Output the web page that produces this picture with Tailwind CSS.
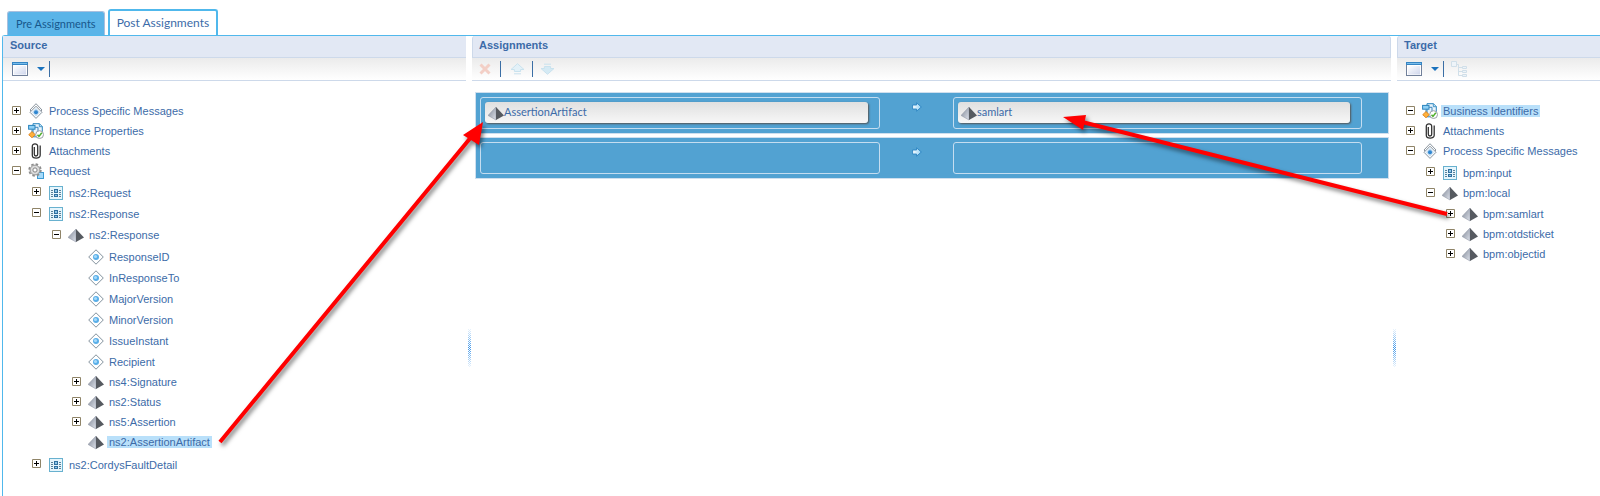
<!DOCTYPE html>
<html lang="en">
<head>
  <meta charset="UTF-8">
  <title>Message Map</title>
  <script src="https://cdn.jsdelivr.net/npm/@tailwindcss/browser@4"></script>
  <meta name="viewport" content="width=device-width, initial-scale=1.0">
</head>
<body class="relative flex min-h-screen flex-col overflow-hidden bg-white font-['Liberation_Sans',Arial,sans-serif] text-[11px] text-[#3c6ba8]">

  <!-- shared icons -->
  <svg class="absolute size-0">
    <defs>
      <linearGradient id="pyrLight" x1="0" y1="0" x2="1" y2="1">
        <stop offset="0" stop-color="#7d8593"/><stop offset="1" stop-color="#dfe3ec"/>
      </linearGradient>
      <linearGradient id="winFill" x1="0" y1="0" x2="1" y2="1">
        <stop offset="0" stop-color="#ffffff"/><stop offset="1" stop-color="#cfd6ec"/>
      </linearGradient>
      <linearGradient id="arrowFill" x1="0" y1="0" x2="1" y2="0">
        <stop offset="0" stop-color="#ffffff"/><stop offset="1" stop-color="#8fd0f5"/>
      </linearGradient>
      <pattern id="checker" width="2" height="2" patternUnits="userSpaceOnUse">
        <path d="M0 0h1v1H0zM1 1h1v1H1z" fill="#3f97ea"/>
      </pattern>
      <linearGradient id="fade" x1="0" y1="0" x2="0" y2="1">
        <stop offset="0" stop-color="#fff" stop-opacity=".9"/><stop offset=".5" stop-color="#fff" stop-opacity="0"/><stop offset="1" stop-color="#fff" stop-opacity=".9"/>
      </linearGradient>
    </defs>
    <symbol id="message" viewBox="0 0 16 16">
      <path d="M8 .7 14 7 8 13 2 7Z" fill="#fff" stroke="#8a949e"/>
      <path d="M8 3.2 14 9.3 8 15.4 2 9.3Z" fill="#f4f9fd" stroke="#8a949e"/>
      <path d="M8 5.6 11.4 9.2 8 12.8 4.6 9.2Z" fill="#c4def4" stroke="#a9c8e2" stroke-width=".6"/>
      <circle cx="8" cy="9.2" r="2" fill="#2f86d0"/>
    </symbol>
    <symbol id="props" viewBox="0 0 16 16">
      <path d="M5 .7h6.5l2.8 2.8v10.3H5z" fill="#e9f4fc" stroke="#2a84bd"/>
      <path d="M11.3 .7v3h3" fill="#bfe0f5" stroke="#2a84bd" stroke-width=".8"/>
      <rect x=".6" y="2.4" width="6.4" height="3.8" fill="#8fd0f5" stroke="#2a84bd"/>
      <path d="M4 6.5v3M7 4.3h3v4" fill="none" stroke="#3c86bd"/>
      <path d="M4 8.6 7.3 11.7 4 14.8.7 11.7Z" fill="#ffb13d" stroke="#d97a10" stroke-width=".8"/>
      <circle cx="11.6" cy="11.6" r="3.9" fill="#fff" stroke="#9aa0a6"/>
      <path d="M9.5 11.7 11 13.4 13.8 9.8" fill="none" stroke="#4fae2c" stroke-width="1.5"/>
    </symbol>
    <symbol id="clip" viewBox="0 0 16 16">
      <path d="M6.3 4v7.2c0 2.4 3.4 2.4 3.4 0V3.2c0-3.2-5.4-3.2-5.4 0v9c0 3.8 7.9 3.8 7.9 0V2.6" fill="none" stroke="#333" stroke-width="1.3"/>
    </symbol>
    <symbol id="gear" viewBox="0 0 16 16">
      <rect x="9.5" y="9.5" width="6" height="6" fill="#a5dafa" stroke="#3f9bd3"/>
      <circle cx="7" cy="7" r="5.9" fill="none" stroke="#8d8d8d" stroke-width="1.6" stroke-dasharray="2.5 2.13"/>
      <circle cx="7" cy="7" r="4.9" fill="#dcdcdc" stroke="#8d8d8d" stroke-width=".9"/>
      <circle cx="7" cy="7" r="2.1" fill="#fff" stroke="#858585"/>
    </symbol>
    <symbol id="grid" viewBox="0 0 16 16">
      <rect x="1.5" y="1.5" width="13" height="13" fill="#e6f5fc" stroke="#68b1cf"/>
      <path d="M3 5.5h2M3 7.5h2M3 9.5h2M3 11.5h2M11 5.5h2M11 7.5h2M11 9.5h2M11 11.5h2" stroke="#5a8198"/>
      <rect x="6.5" y="4.5" width="3" height="3" fill="#8cc5e8" stroke="#2f6f9e"/>
      <rect x="6.5" y="9.5" width="3" height="2" fill="#8cc5e8" stroke="#2f6f9e"/>
    </symbol>
    <symbol id="element" viewBox="0 0 16 16">
      <path d="M8 2 0 10.4 8 15Z" fill="url(#pyrLight)" stroke="#8a90a0" stroke-width=".5"/>
      <path d="M8 2 16 10.4 8 15Z" fill="#565a60"/>
    </symbol>
    <symbol id="attribute" viewBox="0 0 16 16">
      <path d="M8 .8 15.3 8 8 15.2.7 8Z" fill="#fff" stroke="#83929d" stroke-linejoin="round"/>
      <circle cx="8" cy="8" r="3" fill="#58aee8"/>
      <circle cx="7.5" cy="7.5" r="1.6" fill="#a7dafa"/>
    </symbol>
    <symbol id="window" viewBox="0 0 16 14">
      <rect x=".5" y=".5" width="15" height="13" fill="#fff" stroke="#71809a"/>
      <rect x="2" y="4" width="12" height="8.5" fill="url(#winFill)"/>
      <path d="M0 1.5h16" stroke="#3585c4" stroke-width="3"/>
      <path d="M1 1.5h14" stroke="#79bdea"/>
    </symbol>
    <symbol id="assign" viewBox="0 0 10 10">
      <path d="M.6 3h4V.8L9.3 5 4.6 9.2V7h-4z" fill="url(#arrowFill)" stroke="#2a83c2" stroke-width=".9"/>
    </symbol>
    <symbol id="grip" viewBox="0 0 3 38">
      <path d="M0 0h3v38H0z" fill="url(#checker)"/>
      <path d="M0 0h3v38H0z" fill="url(#fade)"/>
    </symbol>
  </svg>

  <div class="flex items-end gap-[3px] pt-[9px] pl-[7px] font-[Lato,'Noto_Sans',sans-serif]">
    <button class="h-6 rounded-t-[3px] border border-b-0 border-[#a9c0de] bg-[#5ab4e8] px-2 text-[11px] leading-5 text-[#17578c]">Pre Assignments</button>
    <button class="h-[26px] rounded-t-[3px] border-2 border-b-0 border-[#50b8ec] bg-white px-[7px] text-[12px] leading-6">Post Assignments</button>
  </div>

  <main class="ml-0.5 grid flex-1 grid-cols-[463fr_6px_919fr_6px_203fr] rounded-tl-[3px] border-t border-l border-[#50b8ec]">

    <section class="min-w-0">
      <h2 class="h-[22px] border-b border-[#cdd9ea] bg-[#e2e8f4] pl-[7px] font-bold leading-[19px]">Source</h2>
      <div class="flex h-[23px] items-center border-b border-[#cdd9ea] bg-gradient-to-b from-[#ebebeb] to-white pl-[9px]">
        <button aria-label="View" class="flex items-center gap-[9px]"><svg class="h-[14px] w-4"><use href="#window"/></svg><svg class="h-1 w-2" viewBox="0 0 8 4"><path d="M0 0h8L4 4z" fill="#1a72bd"/></svg></button>
        <span class="ml-1 h-4 w-px bg-[#3a6ea5]"></span>
      </div>
      <div id="source" class="pt-5 pl-[9px]"></div>
    </section>

    <div class="pt-[293px]"><svg class="mx-auto h-[38px] w-[3px]"><use href="#grip"/></svg></div>

    <section class="min-w-0">
      <h2 class="h-[22px] rounded-t-[3px] border border-t-0 border-[#cdd9ea] bg-[#e2e8f4] pl-1.5 font-bold leading-[19px]">Assignments</h2>
      <div class="flex h-[23px] items-center border-b border-[#cdd9ea] bg-gradient-to-b from-[#ebebeb] to-white pl-[7px]">
        <button aria-label="Delete" disabled><svg class="h-3 w-3" viewBox="0 0 12 12"><path d="M1.5 1.5 10.5 10.5M10.5 1.5 1.5 10.5" stroke="#f3cfc6" stroke-width="3"/></svg></button>
        <span class="mx-[9px] h-4 w-px bg-[#3a6ea5]"></span>
        <button aria-label="Move up" disabled><svg class="h-3 w-[15px]" viewBox="0 0 15 12"><path d="M7.5.7 14 6.5h-3.4v2H4.4v-2H1zM4 10.8h7" fill="#e3f1f8" stroke="#c9e2ee"/></svg></button>
        <span class="mx-[7px] h-4 w-px bg-[#3a6ea5]"></span>
        <button aria-label="Move down" disabled><svg class="h-3 w-[15px]" viewBox="0 0 15 12"><path d="M7.5 11.3 14 5.5h-3.4v-2H4.4v2H1zM4 1.2h7" fill="#d5eaf4" stroke="#c9e2ee"/></svg></button>
      </div>

      <div class="flex flex-col gap-[3px] pt-[11px] pr-0.5 pl-[3px]">
        <div class="grid h-[42px] grid-cols-[400fr_73px_409fr] border border-[#cfdfee] bg-[#52a2d2] py-1 pr-[26px] pl-1">
          <div class="rounded-[3px] border border-[#c5ddf0] p-1 pr-[11px]">
            <div class="flex h-[21px] items-center rounded-[3px] bg-gradient-to-b from-[#e0e0e0] to-[#f7f7f7] pl-[3px] font-[Lato,'Noto_Sans',sans-serif] shadow-[1px_1px_2px_#555]"><svg class="size-4"><use href="#element"/></svg>AssertionArtifact</div>
          </div>
          <svg class="mt-[5px] size-[10px] justify-self-center"><use href="#assign"/></svg>
          <div class="rounded-[3px] border border-[#c5ddf0] p-1 pr-[11px]">
            <div class="flex h-[21px] items-center rounded-[3px] bg-gradient-to-b from-[#e0e0e0] to-[#f7f7f7] pl-[3px] font-[Lato,'Noto_Sans',sans-serif] shadow-[1px_1px_2px_#555]"><svg class="size-4"><use href="#element"/></svg>samlart</div>
          </div>
        </div>
        <div class="grid h-[42px] grid-cols-[400fr_73px_409fr] border border-[#cfdfee] bg-[#52a2d2] py-1 pr-[26px] pl-1">
          <div class="rounded-[3px] border border-[#c5ddf0]"></div>
          <svg class="mt-[5px] size-[10px] justify-self-center"><use href="#assign"/></svg>
          <div class="rounded-[3px] border border-[#c5ddf0]"></div>
        </div>
      </div>
    </section>

    <div class="pt-[293px]"><svg class="mx-auto h-[38px] w-[3px]"><use href="#grip"/></svg></div>

    <section class="min-w-0">
      <h2 class="h-[22px] rounded-tl-[3px] border-b border-l border-[#cdd9ea] bg-[#e2e8f4] pl-1.5 font-bold leading-[19px]">Target</h2>
      <div class="flex h-[23px] items-center border-b border-[#cdd9ea] bg-gradient-to-b from-[#ebebeb] to-white pl-[9px]">
        <button aria-label="View" class="flex items-center gap-[9px]"><svg class="h-[14px] w-4"><use href="#window"/></svg><svg class="h-1 w-2" viewBox="0 0 8 4"><path d="M0 0h8L4 4z" fill="#1a72bd"/></svg></button>
        <span class="ml-1 h-4 w-px bg-[#3a6ea5]"></span>
        <button aria-label="Show hierarchy" class="ml-[7px]" disabled><svg class="size-4" viewBox="0 0 16 16" fill="none" stroke="#d0dfe9"><path d="M.5.5h5v5h-5zM11.5 5.5h4v2h-4zM11.5 9.5h4v2h-4zM11.5 13.5h4v2h-4z" fill="#eef4f9"/><path d="M5.5 3.5h2v11h4M7.5 6.5h4M7.5 10.5h4"/></svg></button>
      </div>
      <div id="target" class="pt-5 pl-[9px]"></div>
    </section>
  </main>

  <!-- mapping arrows -->
  <svg class="pointer-events-none absolute top-0 left-0 h-[496px] w-[1600px] drop-shadow-[2px_3px_2px_#00000080]" viewBox="0 0 1600 496" fill="#f00" stroke="#f00">
    <path d="M220 442 472 136M1447 214 1082 122" stroke-width="4"/>
    <path d="M483 122 479 145 463 135ZM1063 117 1086 115 1083 130Z" stroke="none"/>
  </svg>

  <script>
    const leaf = (icon, label, selected) => ({ icon, label, selected, leaf: true });
    const node = (icon, label, children, selected) => ({ icon, label, children, selected });

    const source = [
      node('message', 'Process Specific Messages'),
      node('props', 'Instance Properties'),
      node('clip', 'Attachments'),
      node('gear', 'Request', [
        node('grid', 'ns2:Request'),
        node('grid', 'ns2:Response', [
          node('element', 'ns2:Response', [
            leaf('attribute', 'ResponseID'),
            leaf('attribute', 'InResponseTo'),
            leaf('attribute', 'MajorVersion'),
            leaf('attribute', 'MinorVersion'),
            leaf('attribute', 'IssueInstant'),
            leaf('attribute', 'Recipient'),
            node('element', 'ns4:Signature'),
            node('element', 'ns2:Status'),
            node('element', 'ns5:Assertion'),
            leaf('element', 'ns2:AssertionArtifact', true),
          ]),
        ]),
        node('grid', 'ns2:CordysFaultDetail'),
      ]),
    ];

    const target = [
      node('props', 'Business Identifiers', [], true),
      node('clip', 'Attachments'),
      node('message', 'Process Specific Messages', [
        node('grid', 'bpm:input'),
        node('element', 'bpm:local', [
          node('element', 'bpm:samlart'),
          node('element', 'bpm:otdsticket'),
          node('element', 'bpm:objectid'),
        ]),
      ]),
    ];

    function toggle(item) {
      if (item.leaf) return '<span class="w-[9px]"></span>';
      const plus = item.children ? '' : 'M4.5 2v5';
      return `
        <button aria-label="Toggle ${item.label}" class="mb-0.5">
          <svg class="size-[9px]" viewBox="0 0 9 9"><path d="M.5.5h8v8h-8z" fill="#fff" stroke="#8f8468"/><path d="M2 4.5h5${plus}" stroke="#000"/></svg>
        </button>`;
    }

    function renderTree(items) {
      return items.map(item => {
        const height = item.icon === 'grid' || item.icon === 'attribute' ? 'h-[21px]' : 'h-5';
        const mark = item.selected ? 'bg-[#b9e0fa]' : '';
        const kids = item.children && item.children.length
          ? `<ul class="py-px pl-5">${renderTree(item.children)}</ul>` : '';
        return `
          <li>
            <div class="flex items-center ${height}">
              ${toggle(item)}
              <svg class="ml-[7px] size-4"><use href="#${item.icon}"/></svg>
              <span class="ml-[3px] px-0.5 leading-3 whitespace-nowrap ${mark}">${item.label}</span>
            </div>
            ${kids}
          </li>`;
      }).join('');
    }

    document.getElementById('source').innerHTML = `<ul>${renderTree(source)}</ul>`;
    document.getElementById('target').innerHTML = `<ul>${renderTree(target)}</ul>`;
  </script>

</body>
</html>
